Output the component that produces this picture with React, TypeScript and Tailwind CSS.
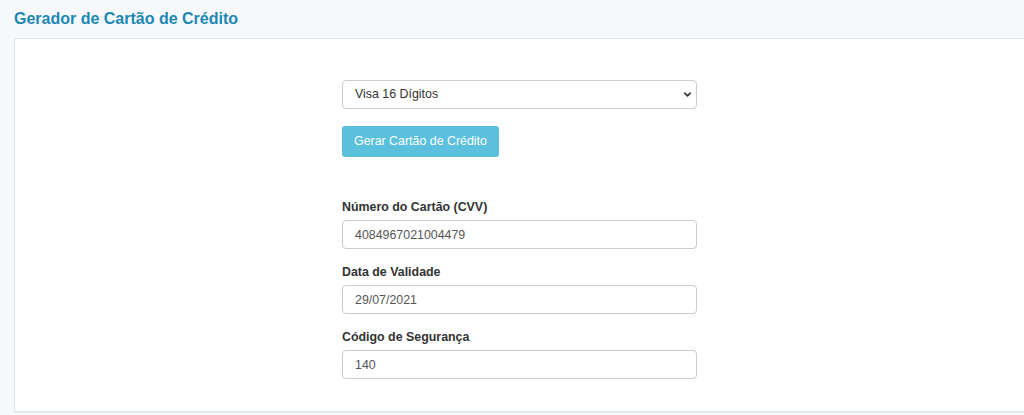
import { ChevronDown } from "lucide-react"

const font = { fontFamily: '"Liberation Sans", Arial, sans-serif' }

function Field({ label, value, first }: { label: string; value: string; first?: boolean }) {
  return (
    <div className={first ? "" : "mt-[15px]"}>
      <label className="block h-4 text-[12.4px] leading-4 font-bold text-[#333]">{label}</label>
      <input
        readOnly
        value={value}
        className="mt-[5px] block h-[29px] w-full rounded-[4px] border border-[#ccc] bg-white px-3 text-[12.4px] text-[#555] outline-none"
      />
    </div>
  )
}

export default function App() {
  return (
    <div className="min-h-[415px] bg-[#f8f9fc] pl-[14px]" style={font}>
      {/* Title */}
      <div className="flex h-[38px] items-start pt-[10px]">
        <h1 className="text-[16px] leading-[18px] font-bold text-[#1b88b3]">Gerador de Cartão de Crédito</h1>
      </div>

      {/* Panel */}
      <section className="border-t border-b-2 border-l border-[#e3e6ea] bg-white pt-[41px] pb-[32px]">
        <div className="mx-auto w-[355px]">
          <div className="relative">
            <select
              defaultValue="visa16"
              className="block h-[29px] w-full appearance-none rounded-[4px] border border-[#ccc] bg-white pl-3 text-[12.4px] text-[#333] outline-none"
            >
              <option value="visa16">Visa 16 Dígitos</option>
            </select>
            <ChevronDown className="pointer-events-none absolute top-[9px] right-[4px] h-[11px] w-[11px] text-[#333]" strokeWidth={3.5} />
          </div>

          <button className="mt-[17px] h-[31px] rounded-[3px] bg-[#5bc0de] px-[12px] text-[12.4px] text-white">
            Gerar Cartão de Crédito
          </button>

          <div className="mt-[42px]">
            <Field first label="Número do Cartão (CVV)" value="4084967021004479" />
            <Field label="Data de Validade" value="29/07/2021" />
            <Field label="Código de Segurança" value="140" />
          </div>
        </div>
      </section>
    </div>
  )
}
